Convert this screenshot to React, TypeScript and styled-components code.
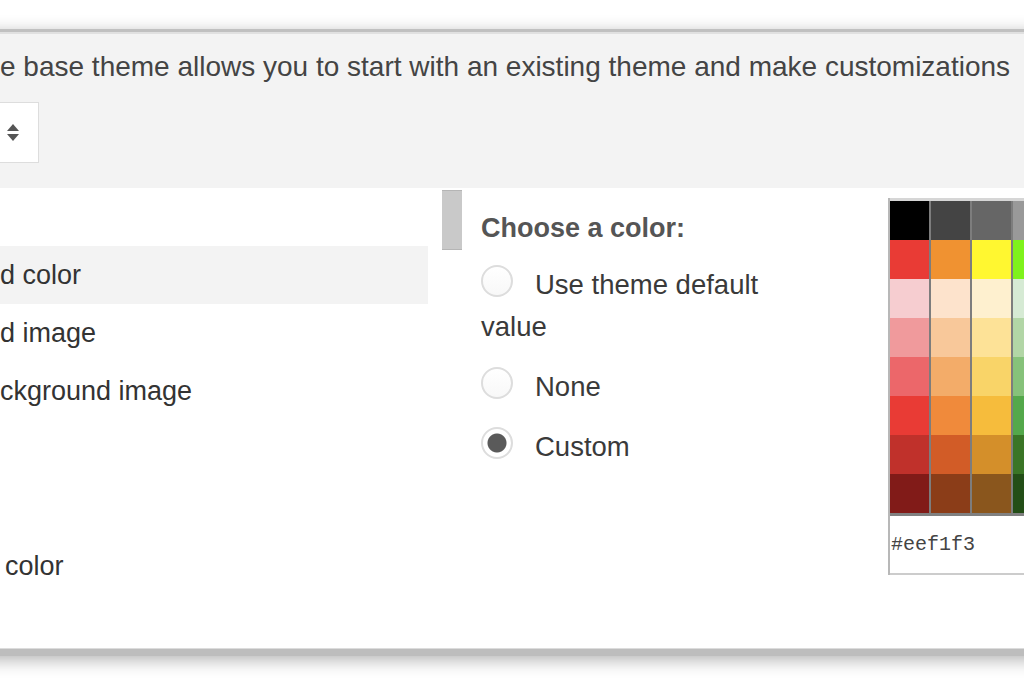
import styled, { createGlobalStyle } from 'styled-components';

const GlobalStyle = createGlobalStyle`
  html, body {
    margin: 0;
    padding: 0;
    background: #ffffff;
  }
  body {
    font-family: 'Liberation Sans', Arial, sans-serif;
  }
`;

const PALETTE = [
  ['#000000', '#444444', '#666666', '#999999', '#b7b7b7'],
  ['#e93b35', '#f09231', '#fff730', '#7ff21c', '#00ffff'],
  ['#f6cdd0', '#fde3cc', '#fef0cf', '#d6ead4', '#d0e0e3'],
  ['#f09a9c', '#f8c89a', '#fde297', '#b2d6a6', '#a2c4c9'],
  ['#ec676a', '#f3ac69', '#f9d468', '#86c27a', '#76a5af'],
  ['#e93b35', '#f08a3b', '#f6bc3c', '#54a84b', '#45818e'],
  ['#c0312b', '#d25c27', '#d48f2a', '#3a7526', '#134f5c'],
  ['#811b18', '#8b3d18', '#8a561d', '#234e17', '#0c343d'],
];

const ITEMS = [
  { label: '', indent: 0 },
  { label: 'd color', indent: 0, active: true },
  { label: 'd image', indent: 0 },
  { label: 'ckground image', indent: 0 },
  { label: '', indent: 0 },
  { label: '', indent: 0 },
  { label: 'color', indent: 7 },
];

const OPTIONS = [
  { label: 'Use theme default value', checked: false },
  { label: 'None', checked: false },
  { label: 'Custom', checked: true },
];

export default function App() {
  return (
    <Page>
      <GlobalStyle />
      <Dialog>
        <Header>
          <Intro>e base theme allows you to start with an existing theme and make customizations</Intro>
          <SelectBox>
            <Arrows>
              <ArrowUp />
              <ArrowDown />
            </Arrows>
          </SelectBox>
        </Header>
        <Body>
          <ItemList>
            {ITEMS.map((item, i) => (
              <Item key={i} $active={item.active} $indent={item.indent}>
                {item.label}
              </Item>
            ))}
          </ItemList>
          <ScrollTrack>
            <ScrollThumb />
          </ScrollTrack>
          <ColorChooser>
            <ChooserTitle>Choose a color:</ChooserTitle>
            {OPTIONS.map((opt) => (
              <Option key={opt.label}>
                <Radio $checked={opt.checked} />
                {opt.label}
              </Option>
            ))}
          </ColorChooser>
          <Picker>
            <Swatches>
              {PALETTE.flat().map((c, i) => (
                <Swatch key={i} $color={c} />
              ))}
            </Swatches>
            <HexInput>#eef1f3</HexInput>
          </Picker>
        </Body>
      </Dialog>
    </Page>
  );
}

const Page = styled.div`
  width: 1024px;
  height: 683px;
  overflow: hidden;
  background: #ffffff;
  padding-top: 29px;
  box-sizing: border-box;
`;

const Dialog = styled.div`
  width: 1124px;
  margin-left: -20px;
  background: #ffffff;
  border-top: 3px solid #c0c0c0;
  border-bottom: 7px solid #bdbdbd;
  box-shadow: 0 4px 16px rgba(0, 0, 0, 0.3);
`;

const Header = styled.div`
  background: #f3f3f3;
  border-top: 2px solid #e0e0e0;
  padding: 17px 0 25px 20px;
`;

const Intro = styled.div`
  font-size: 28px;
  line-height: 32px;
  color: #444444;
  white-space: nowrap;
`;

const SelectBox = styled.div`
  width: 100px;
  height: 61px;
  margin: 19px 0 0 -61px;
  background: #ffffff;
  border: 1px solid #dddddd;
  display: flex;
  justify-content: flex-end;
  align-items: center;
  padding-right: 19px;
  box-sizing: border-box;
`;

const Arrows = styled.div`
  display: flex;
  flex-direction: column;
  gap: 3px;
`;

const ArrowUp = styled.div`
  width: 0;
  height: 0;
  border-left: 6px solid transparent;
  border-right: 6px solid transparent;
  border-bottom: 7px solid #555555;
`;

const ArrowDown = styled(ArrowUp)`
  border-bottom: 0;
  border-top: 7px solid #555555;
`;

const Body = styled.div`
  display: flex;
  height: 460px;
  border-bottom: 1px solid #dcdcdc;
  padding-left: 20px;
  background: #ffffff;
`;

const ItemList = styled.div`
  width: 428px;
  flex: 0 0 428px;
`;

const Item = styled.div<{ $active?: boolean; $indent: number }>`
  height: 58px;
  display: flex;
  align-items: center;
  padding: 3px 0 0 ${(p) => p.$indent - 2}px;
  box-sizing: border-box;
  font-size: 27px;
  color: #333333;
  white-space: nowrap;
  background: ${(p) => (p.$active ? '#f3f3f3' : 'transparent')};
`;

const ScrollTrack = styled.div`
  flex: 0 0 53px;
  padding: 2px 0 0 14px;
  box-sizing: border-box;
`;

const ScrollThumb = styled.div`
  width: 20px;
  height: 60px;
  background: #c9c9c9;
  border-top: 1px solid #b5b5b5;
  border-bottom: 1px solid #b5b5b5;
  box-sizing: border-box;
`;

const ColorChooser = styled.div`
  flex: 0 0 407px;
  padding-top: 24px;
  box-sizing: border-box;
`;

const ChooserTitle = styled.div`
  font-size: 27px;
  line-height: 32px;
  font-weight: bold;
  color: #555555;
  margin-bottom: 20px;
`;

const Option = styled.div`
  width: 330px;
  font-size: 27.5px;
  line-height: 42px;
  color: #3a3a3a;
  margin-bottom: 18px;
`;

const Radio = styled.span<{ $checked: boolean }>`
  display: inline-block;
  width: 32px;
  height: 32px;
  margin-right: 22px;
  vertical-align: -3px;
  border-radius: 50%;
  border: 2px solid #dddddd;
  box-sizing: border-box;
  background: ${(p) =>
    p.$checked
      ? 'radial-gradient(circle, #5a5a5a 0 9px, #ffffff 10px)'
      : 'linear-gradient(#ffffff, #f8f8f8)'};
`;

const Picker = styled.div`
  margin-top: 10px;
  width: 300px;
  border-left: 2px solid #b8b8b8;
  align-self: flex-start;
`;

const Swatches = styled.div`
  display: grid;
  grid-template-columns: repeat(5, 39px);
  grid-auto-rows: 39px;
  column-gap: 2px;
  background: #7d7d7d;
  border-top: 3px solid #d6d6d6;
  border-bottom: 3px solid #808080;
`;

const Swatch = styled.div<{ $color: string }>`
  background: ${(p) => p.$color};
`;

const HexInput = styled.div`
  height: 57px;
  display: flex;
  align-items: center;
  padding-left: 1px;
  font-family: 'Liberation Mono', 'Courier New', monospace;
  font-size: 20px;
  color: #444444;
  border-bottom: 2px solid #cccccc;
  background: #ffffff;
`;
